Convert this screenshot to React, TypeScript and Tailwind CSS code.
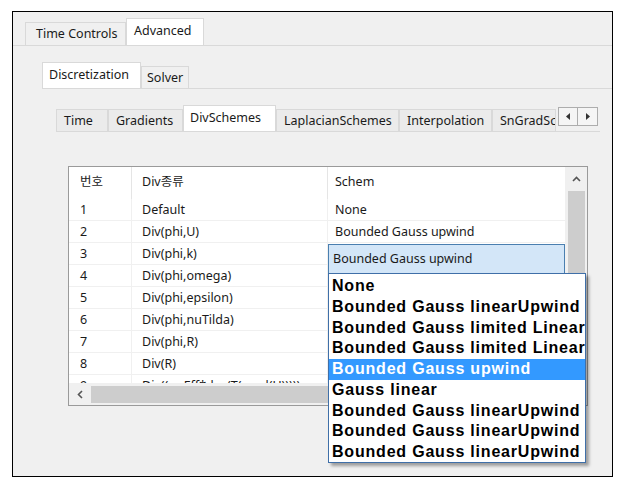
import React from "react"

const ui = { fontFamily: '"Noto Sans", "Noto Sans CJK KR", sans-serif' }
const drop = { fontFamily: '"Liberation Sans", Arial, sans-serif' }

const rows = [
  { no: "1", div: "Default", schem: "None" },
  { no: "2", div: "Div(phi,U)", schem: "Bounded Gauss upwind" },
  { no: "3", div: "Div(phi,k)", schem: "" },
  { no: "4", div: "Div(phi,omega)", schem: "" },
  { no: "5", div: "Div(phi,epsilon)", schem: "" },
  { no: "6", div: "Div(phi,nuTilda)", schem: "" },
  { no: "7", div: "Div(phi,R)", schem: "" },
  { no: "8", div: "Div(R)", schem: "" },
  { no: "9", div: "Div((nuEff*dev(T(grad(U)))))", schem: "" },
]

const options = [
  "None",
  "Bounded Gauss linearUpwind",
  "Bounded Gauss limited Linear 1",
  "Bounded Gauss limited Linear 1",
  "Bounded Gauss upwind",
  "Gauss linear",
  "Bounded Gauss linearUpwind",
  "Bounded Gauss linearUpwind",
  "Bounded Gauss linearUpwind",
]

const subTabs = [
  { label: "Time", w: "w-[52px]" },
  { label: "Gradients", w: "w-[75px]" },
  { label: "DivSchemes", w: "w-[93px]", active: true },
  { label: "LaplacianSchemes", w: "w-[123px]" },
  { label: "Interpolation", w: "w-[93px]" },
  { label: "SnGradSchemes", w: "w-[64px]" },
]

export default function App() {
  return (
    <div className="w-[626px] h-[484px] bg-white pt-[11px] pl-[12px] text-[#1a1a1a]" style={ui}>
      <div className="w-[601px] h-[466px] border border-black bg-[#f0f0f0] overflow-hidden">
        {/* top tabs */}
        <div className="flex items-end pl-[12px] pt-[6px] border-b border-[#d9d9d9] text-[12.5px]">
          <div className="w-[101px] h-[23px] border border-b-0 border-[#d9d9d9] bg-[#f0f0f0] pl-[10px] leading-[22px]">
            Time Controls
          </div>
          <div className="w-[78px] h-[27px] border border-b-0 border-[#d9d9d9] bg-white pl-[7px] leading-[24px]">
            Advanced
          </div>
        </div>

        <div className="pl-[29px] pt-[16px]">
          {/* second tabs */}
          <div className="flex items-end border-b border-[#d9d9d9] text-[12.5px]">
            <div className="w-[99px] h-[26px] border border-b-0 border-[#d9d9d9] bg-white pl-[6px] leading-[24px]">
              Discretization
            </div>
            <div className="w-[48px] h-[22px] border border-b-0 border-[#d9d9d9] bg-[#f0f0f0] pl-[5px] leading-[22px]">
              Solver
            </div>
          </div>

          <div className="pl-[14px] pt-[16px]">
            {/* third tabs */}
            <div className="flex items-end border-b border-[#d9d9d9] text-[12.5px] w-[544px]">
              {subTabs.map((t) => (
                <div
                  key={t.label}
                  className={`${t.w} shrink-0 overflow-hidden whitespace-nowrap border border-b-0 border-[#d9d9d9] ${
                    t.active ? "h-[26px] bg-white leading-[24px] pl-[6px]" : "h-[22px] bg-[#ebebeb] leading-[21px] pl-[7px]"
                  }`}
                >
                  {t.label}
                </div>
              ))}
              <div className="flex self-start mt-[2px] ml-[2px]">
                <div className="w-[20px] h-[19px] border border-[#adadad] bg-[#f5f5f5] flex items-center justify-center">
                  <svg width="4" height="7" viewBox="0 0 4 7">
                    <path d="M4 0 L0 3.5 L4 7 Z" fill="#333" />
                  </svg>
                </div>
                <div className="w-[20px] h-[19px] border border-l-0 border-[#adadad] bg-[#f5f5f5] flex items-center justify-center">
                  <svg width="4" height="7" viewBox="0 0 4 7">
                    <path d="M0 0 L4 3.5 L0 7 Z" fill="#333" />
                  </svg>
                </div>
              </div>
            </div>

            {/* table */}
            <div className="ml-[12px] mt-[34px] relative w-[520px] h-[240px]">
              <div className="w-full h-full border border-[#9a9a9a] bg-white grid grid-cols-[496px_22px] grid-rows-[216px_22px] text-[12.5px]">
                <div className="overflow-hidden">
                  <div className="flex h-[32px] items-center">
                    <div className="w-[63px] pl-[11px] border-r border-[#e5e5e5] h-full leading-[30px]">번호</div>
                    <div className="w-[196px] pl-[10px] border-r border-[#e5e5e5] h-full leading-[30px]">Div종류</div>
                    <div className="flex-1 pl-[7px] leading-[30px] h-full">Schem</div>
                  </div>
                  {rows.map((r) => (
                    <div key={r.no} className="flex h-[22px] border-b border-[#f0f0f0] leading-[21px] whitespace-nowrap">
                      <div className="w-[63px] pl-[11px] border-r border-[#f0f0f0]">{r.no}</div>
                      <div className="w-[196px] pl-[10px] border-r border-[#f0f0f0]">{r.div}</div>
                      <div className="flex-1 pl-[7px]">{r.schem}</div>
                    </div>
                  ))}
                </div>
                <div className="bg-[#f0f0f0] flex flex-col items-center">
                  <div className="h-[24px] flex items-center justify-center">
                    <svg width="9" height="6" viewBox="0 0 9 6">
                      <path d="M1 5 L4.5 1.5 L8 5" stroke="#555" strokeWidth="1.6" fill="none" />
                    </svg>
                  </div>
                  <div className="w-[17px] h-[120px] bg-[#cdcdcd]" />
                </div>
                <div className="bg-[#f0f0f0] flex items-center">
                  <div className="w-[22px] flex items-center justify-center">
                    <svg width="6" height="9" viewBox="0 0 6 9">
                      <path d="M5 1 L1.5 4.5 L5 8" stroke="#555" strokeWidth="1.6" fill="none" />
                    </svg>
                  </div>
                  <div className="w-[300px] h-[17px] bg-[#cdcdcd]" />
                </div>
                <div className="bg-[#f0f0f0]" />
              </div>

              {/* cell editor */}
              <div className="absolute left-[260px] top-[78px] w-[237px] h-[30px] border border-[#4a7fb0] bg-[#d3e6f8] pl-[4px] leading-[27px] text-[12.5px]">
                Bounded Gauss upwind
              </div>

              {/* dropdown list */}
              <div
                className="absolute left-[260px] top-[107px] w-[258px] h-[190px] border border-[#3f6fa8] bg-white overflow-hidden shadow-[3px_3px_3px_rgba(0,0,0,0.35)] py-[2px] font-bold text-[16px] tracking-[0.8px] text-black"
                style={drop}
              >
                {options.map((o, i) => (
                  <div
                    key={i}
                    className={`h-[20.75px] leading-[20.75px] pl-[3px] whitespace-nowrap ${
                      i === 4 ? "bg-[#3399ff] text-white" : ""
                    }`}
                  >
                    {o}
                  </div>
                ))}
              </div>
            </div>
          </div>
        </div>
      </div>
    </div>
  )
}
